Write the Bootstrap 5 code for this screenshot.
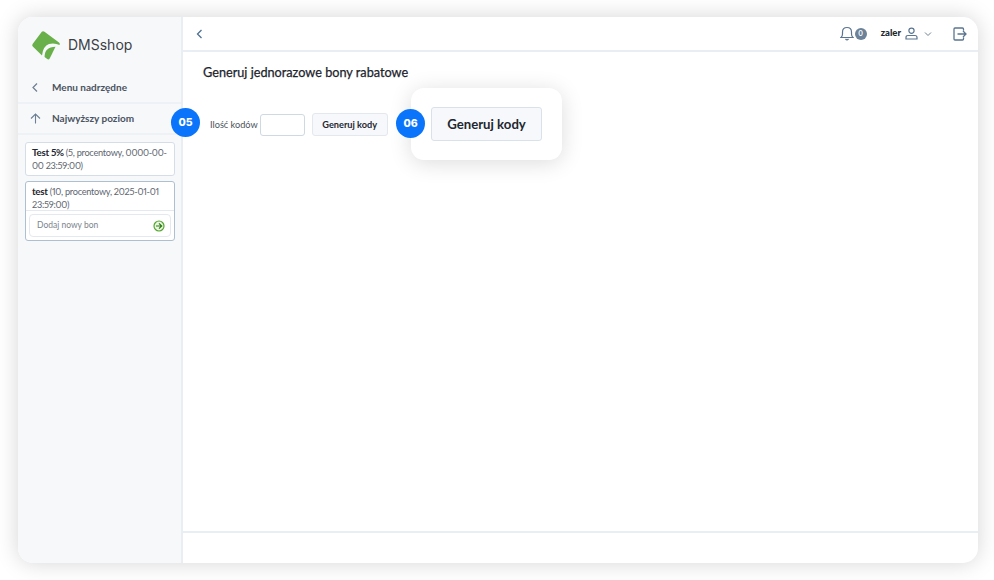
<!DOCTYPE html>
<html lang="pl">
<head>
<meta charset="utf-8">
<title>DMSshop</title>
<link rel="stylesheet" href="https://cdn.jsdelivr.net/npm/bootstrap@5.3.0/dist/css/bootstrap.min.css">
<style>
html,body{height:100%;}
body{background:#fff;font-family:"Lato","Open Sans",sans-serif;overflow:hidden;font-variant-numeric:proportional-nums;}
.stage{height:580px;padding:17px 16px 17px 18px;}
.appwin{height:546px;border-radius:15px;overflow:hidden;box-shadow:0 0 22px rgba(0,0,0,.17);background:#fff;position:relative;}
.side{width:165px;flex:none;background:#f7f8fa;border-right:2px solid #e9eef4;}
.brand{height:56px;padding:13px 0 0 13px;gap:7px;}
.brandname{font-family:"Inter",sans-serif;font-size:14px;color:#3b3f46;}
.siderow{height:31px;padding-left:12px;gap:11px;font-size:10px;font-weight:700;color:#49535f;border-bottom:2px solid #eef1f5;}
.rowicon{width:11px;}
.toplist{padding:7px 6px 0 7px;gap:5px;}
.vitem{font-size:9.2px;line-height:13px;letter-spacing:-.27px;color:#5e6670;background:#fff;border:1px solid #d5dee8;border-radius:3px;padding:3px 6px;white-space:nowrap;}
.vitem b{color:#1f2730;font-size:9.8px;}
.vactive{padding:0;border:1px solid #aebfd0;}
.vtext{padding:3px 6px 0;height:28px;}
.addwrap{border-top:1px solid #e4e9ef;padding:3px;}
.addbox{height:23px;border:1px solid #e4e9ef;border-radius:4px;padding:0 5px 0 7px;font-size:8.5px;letter-spacing:0;color:#7c848d;}
.topbar{height:35px;border-bottom:2px solid #e9eef4;padding:0 11px 0 12px;}
.username{font-size:9.5px;font-weight:900;color:#20272f;margin-left:14px;}
.countdot{width:12px;height:12px;border-radius:50%;background:#6b8299;color:#fff;font-size:7px;font-weight:700;margin-left:1px;}
.chevicon{margin-left:6px;}
.exiticon{margin-left:21px;}
.pagebody{padding:11px 20px;position:relative;}
.pagetitle{font-family:"Lato",sans-serif;font-size:12.7px;font-weight:400;-webkit-text-stroke:.25px #1c232b;color:#1c232b;margin:0;line-height:18px;}
.formrow{margin-top:32px;padding-left:7px;font-size:9.2px;color:#4b535c;}
.qty{width:45px;height:22px;border:1px solid #cfd9e4;border-radius:3px;margin:0 7px 0 2px;background:#fff;}
.genbtn{font-family:"Lato",sans-serif;font-size:9.2px;font-weight:700;color:#1f2730;background:#f6f8fb;border:1px solid #e3e8ee;border-radius:3px;width:76px;height:23px;padding:0;}
.footbar{height:32px;border-top:2px solid #e9eef4;}
.stepdot{position:absolute;width:29px;height:29px;border-radius:50%;background:#0a74fb;color:#fff;font-family:"Inter",sans-serif;font-size:10.5px;font-weight:800;}
.dot5{left:153px;top:91px;}
.dot6{left:378px;top:92px;}
.callout{position:absolute;left:393px;top:71px;width:151px;height:72px;background:#fff;border-radius:13px;box-shadow:0 3px 22px rgba(0,0,0,.14);}
.bigbtn{font-size:13.2px;font-weight:700;color:#1f2730;background:#f6f8fb;border:1px solid #d9e1ea;border-radius:3px;width:111px;height:34px;padding:1px 0 0;font-family:"Lato",sans-serif;}
</style>
</head>
<body>
<div class="stage">
<div class="appwin d-flex">
  <aside class="side d-flex flex-column">
    <div class="brand d-flex align-items-start">
      <svg width="30" height="30" viewBox="0 0 30 30"><path d="M10.8 1.8 Q12 .8 13.5 1.8 L28 12.5 Q29.5 13.8 28.5 15 Q23.5 12.6 18 14 Q12 16 11 25.5 L2 16.8 Q.6 15.5 1.6 14 Z" fill="#6ab04a"/><path d="M13.6 27 Q13.6 17 24.5 16.8 L18.7 28.5 Q17.7 30 16.2 29 Z" fill="#6ab04a"/></svg>
      <span class="brandname mt-1">DMSshop</span>
    </div>
    <div class="siderow d-flex align-items-center">
      <svg class="rowicon" width="11" height="11" viewBox="0 0 11 11"><path d="M7 1.5 L3 5.5 L7 9.5" fill="none" stroke="#6d7f92" stroke-width="1.2"/></svg>
      <span>Menu nadrzędne</span>
    </div>
    <div class="siderow d-flex align-items-center">
      <svg class="rowicon" width="11" height="11" viewBox="0 0 11 11"><path d="M5.5 10.5 V1 M1 5.5 L5.5 1 L10 5.5" fill="none" stroke="#6d7f92" stroke-width="1.1"/></svg>
      <span>Najwyższy poziom</span>
    </div>
    <div class="toplist d-flex flex-column">
      <div class="vitem"><b>Test 5%</b> (5, procentowy, 0000-00-<br>00 23:59:00)</div>
      <div class="vitem vactive">
        <div class="vtext"><b>test</b> (10, procentowy, 2025-01-01<br>23:59:00)</div>
        <div class="addwrap">
          <div class="addbox d-flex align-items-center justify-content-between">
            <span>Dodaj nowy bon</span>
            <svg width="12" height="12" viewBox="0 0 12 12"><circle cx="6" cy="6" r="5" fill="#eaf5e0" stroke="#55a630" stroke-width="1.2"/><path d="M3 6 H8.5 M6 3.4 L8.7 6 L6 8.6" fill="none" stroke="#2f7d16" stroke-width="1.2"/></svg>
          </div>
        </div>
      </div>
    </div>
  </aside>
  <main class="flex-grow-1 d-flex flex-column">
    <div class="topbar d-flex align-items-center">
      <svg width="10" height="10" viewBox="0 0 10 10"><path d="M6.5 1 L2.5 5 L6.5 9" fill="none" stroke="#50708e" stroke-width="1.3"/></svg>
      <div class="ms-auto d-flex align-items-center">
        <svg width="14" height="15" viewBox="0 0 14 15"><path d="M1 11.5 Q2.5 10.5 2.5 8 V6 Q2.5 1.5 7 1.5 Q11.5 1.5 11.5 6 V8 Q11.5 10.5 13 11.5 Z M5.5 13 Q7 14.8 8.5 13" fill="none" stroke="#5a7590" stroke-width="1.2"/></svg>
        <span class="countdot d-flex align-items-center justify-content-center">0</span>
        <span class="username">zaler</span>
        <svg class="ms-1" width="13" height="13" viewBox="0 0 13 13"><circle cx="6.5" cy="3.7" r="2.6" fill="none" stroke="#5a7590" stroke-width="1.2"/><path d="M1 12 V10.5 Q1 8.5 3 8.5 H10 Q12 8.5 12 10.5 V12 Z" fill="none" stroke="#5a7590" stroke-width="1.2"/></svg>
        <svg class="chevicon" width="8" height="6" viewBox="0 0 8 6"><path d="M1 1.5 L4 4.5 L7 1.5" fill="none" stroke="#6c8095" stroke-width="1"/></svg>
        <svg class="exiticon" width="14" height="14" viewBox="0 0 14 14"><path d="M10.5 3.5 V2 Q10.5 1 9.5 1 H2 Q1 1 1 2 V12 Q1 13 2 13 H9.5 Q10.5 13 10.5 12 V10.5 M4.5 7 H13 M10 4 L13 7 L10 10" fill="none" stroke="#5a7590" stroke-width="1.3"/></svg>
      </div>
    </div>
    <div class="pagebody flex-grow-1">
      <h1 class="pagetitle">Generuj jednorazowe bony rabatowe</h1>
      <div class="formrow d-flex align-items-center">
        <span>Ilość kodów</span>
        <input class="qty" type="text" aria-label="Ilość kodów">
        <button class="genbtn" type="button">Generuj kody</button>
      </div>
    </div>
    <div class="footbar"></div>
  </main>
  <div class="callout d-flex align-items-center justify-content-center"><button class="bigbtn" type="button">Generuj kody</button></div>
  <div class="stepdot dot5 d-flex align-items-center justify-content-center">05</div>
  <div class="stepdot dot6 d-flex align-items-center justify-content-center">06</div>
</div>
</div>
<script src="https://cdn.jsdelivr.net/npm/bootstrap@5.3.0/dist/js/bootstrap.bundle.min.js"></script>
</body>
</html>
